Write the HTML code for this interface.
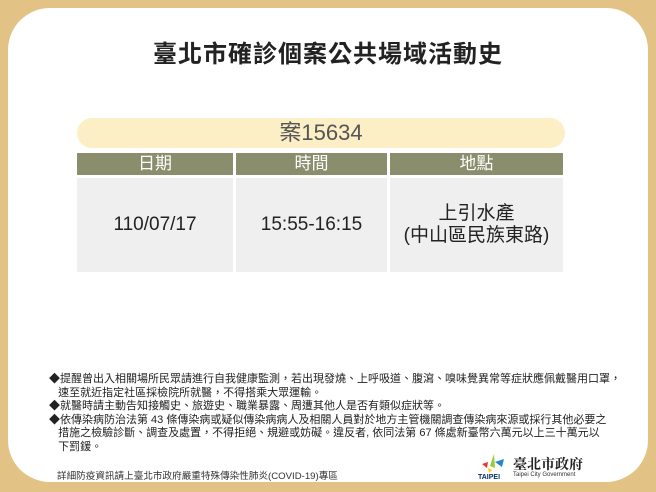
<!DOCTYPE html><html><head><meta charset="utf-8"><style>
body{margin:0;width:656px;height:492px;background:#e2c385;position:relative;overflow:hidden;font-family:"Liberation Sans","Noto Sans CJK TC",sans-serif;}
.card{position:absolute;left:8px;top:8px;width:640px;height:474px;background:#fff;border-radius:42px;}
.t{position:absolute;left:0;width:656px;top:34px;text-align:center;font-size:24px;font-weight:bold;color:#222;letter-spacing:1px}
.pill{position:absolute;left:77px;top:118px;width:488px;height:30px;background:#fcefc6;border-radius:15px;text-align:center;line-height:30px;font-size:22px;color:#555}
.h{position:absolute;top:153px;height:22px;background:#8b8e6c;color:#fff;text-align:center;line-height:22px;font-size:17px}
.c{position:absolute;top:178px;height:94px;background:#efefef;color:#222;display:flex;align-items:center;justify-content:center;text-align:center;font-size:19px;line-height:22px}
.n{position:absolute;left:49px;top:373px;font-size:11px;line-height:13.5px;color:#222;white-space:nowrap}
</style></head><body>
<div class="card"></div>
<div class="t">臺北市確診個案公共場域活動史</div>
<div class="pill">案15634</div>
<div class="h" style="left:77px;width:156px">日期</div>
<div class="h" style="left:236px;width:151px">時間</div>
<div class="h" style="left:390px;width:173px">地點</div>
<div class="c" style="left:77px;width:156px">110/07/17</div>
<div class="c" style="left:236px;width:151px">15:55-16:15</div>
<div class="c" style="left:390px;width:173px">上引水產<br>(中山區民族東路)</div>
<div class="n">
◆提醒曾出入相關場所民眾請進行自我健康監測，若出現發燒、上呼吸道、腹瀉、嗅味覺異常等症狀應佩戴醫用口罩，<br>
&nbsp;&nbsp;&nbsp;速至就近指定社區採檢院所就醫，不得搭乘大眾運輸。<br>
◆就醫時請主動告知接觸史、旅遊史、職業暴露、周遭其他人是否有類似症狀等。<br>
◆依傳染病防治法第 43 條傳染病或疑似傳染病病人及相關人員對於地方主管機關調查傳染病來源或採行其他必要之<br>
&nbsp;&nbsp;&nbsp;措施之檢驗診斷、調查及處置，不得拒絕、規避或妨礙。違反者, 依同法第 67 條處新臺幣六萬元以上三十萬元以<br>
&nbsp;&nbsp;&nbsp;下罰鍰。
</div>
<div style="position:absolute;left:57px;top:468px;font-size:9.6px;color:#333">詳細防疫資訊請上臺北市政府嚴重特殊傳染性肺炎(COVID-19)專區</div>
<svg style="position:absolute;left:478px;top:452px" width="30" height="28" viewBox="0 0 30 28"><path d="M4 12 l6 -2 l-1 6z" fill="#e33"/><path d="M12 14 l4 -12 l1 14z" fill="#9c3"/><path d="M17 10 l9 -3 l-2 8z" fill="#28c"/><path d="M10 16 l4 2 l-3 3z" fill="#fc0"/><text x="0" y="27" font-size="7" font-weight="bold" fill="#036" font-family="Liberation Sans">TAIPEI</text></svg>
<div style="position:absolute;left:513px;top:454px;font-size:14px;font-weight:bold;color:#222;font-family:'Liberation Serif','Noto Serif CJK SC',serif">臺北市政府</div>
<div style="position:absolute;left:513px;top:472px;font-size:6px;color:#333">Taipei City Government</div>
</body></html>
